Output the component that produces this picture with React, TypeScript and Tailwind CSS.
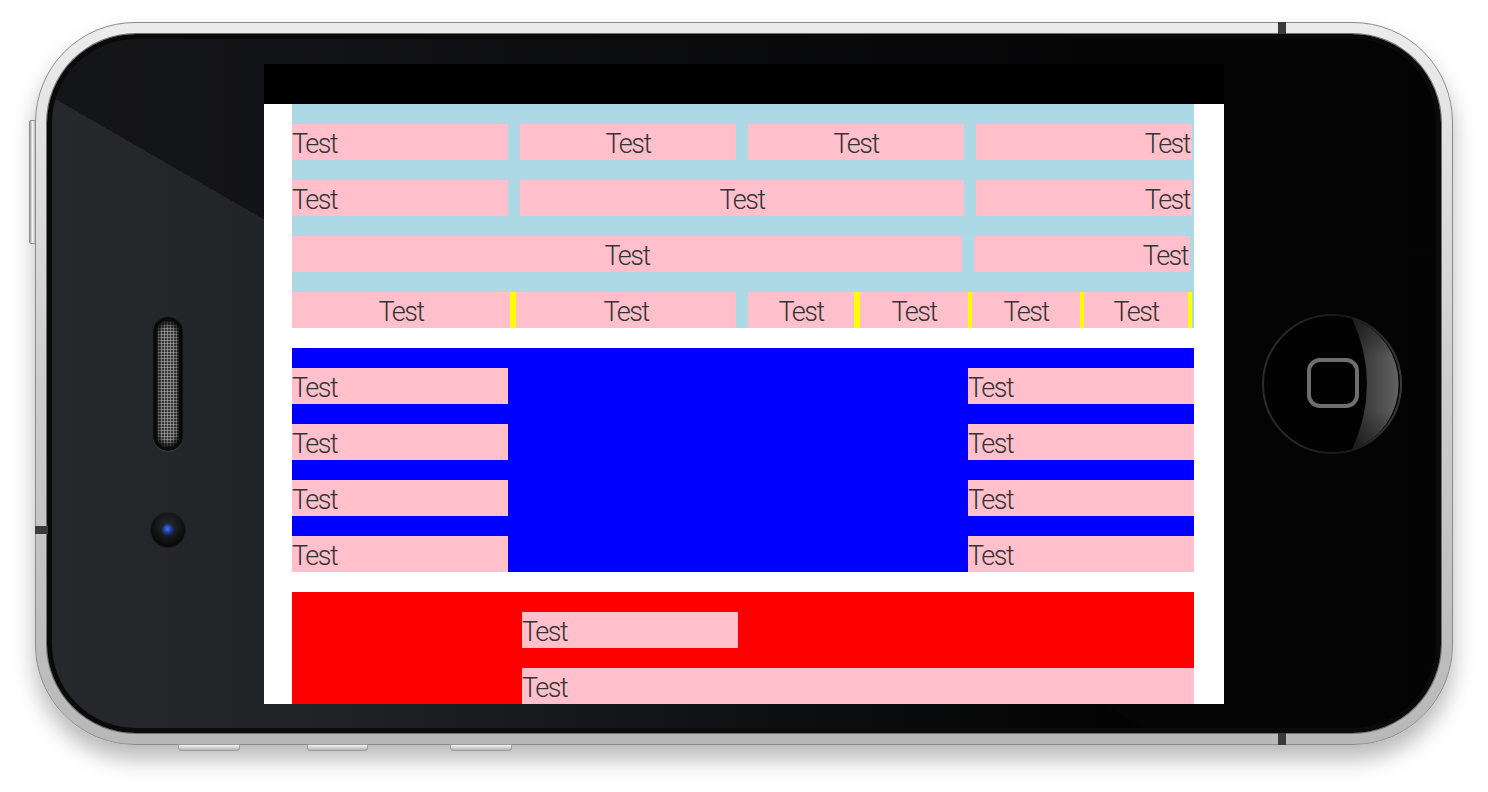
import React from "react";

const font = "font-['Roboto',sans-serif] font-light text-[27px] tracking-[-1.5px] text-[#333]";

function Cell({ className }: { className: string }) {
  return (
    <div className={`h-9 shrink-0 bg-[#ffc0cb] pt-[5px] leading-[31px] whitespace-nowrap ${className}`}>
      Test
    </div>
  );
}

function Yellow({ className }: { className: string }) {
  return <div className={`h-9 shrink-0 bg-[#ffff00] ${className}`} />;
}

function Screen() {
  return (
    <div className={`mt-[25px] flex h-[640px] w-[960px] shrink-0 flex-col overflow-hidden bg-white ${font}`}>
      <div className="h-10 shrink-0 bg-black" />
      <div className="flex flex-col gap-5 pl-[28px] pr-[30px]">
        {/* Section 1 */}
        <div className="flex flex-col gap-5 bg-[#add8e6] pt-5">
          <div className="flex gap-3">
            <Cell className="w-[216px] text-left" />
            <Cell className="w-[216px] text-center" />
            <Cell className="w-[216px] text-center" />
            <Cell className="w-[216px] pr-[2px] text-right" />
          </div>
          <div className="flex gap-3">
            <Cell className="w-[216px] text-left" />
            <Cell className="w-[444px] text-center" />
            <Cell className="w-[216px] pr-[2px] text-right" />
          </div>
          <div className="flex gap-3">
            <Cell className="w-[670px] text-center" />
            <Cell className="w-[216px] pr-[2px] text-right" />
          </div>
          <div className="flex gap-3">
            <div className="flex">
              <Cell className="w-[218px] text-center" />
              <Yellow className="w-[6px]" />
              <Cell className="w-[220px] text-center" />
            </div>
            <div className="flex">
              <Cell className="w-[106px] text-center" />
              <Yellow className="w-[6px]" />
              <Cell className="w-[108px] text-center" />
              <Yellow className="w-[4px]" />
              <Cell className="w-[108px] text-center" />
              <Yellow className="w-[4px]" />
              <Cell className="w-[104px] text-center" />
              <Yellow className="w-[4px]" />
            </div>
          </div>
        </div>

        {/* Section 2 */}
        <div className="flex justify-between bg-[#0000ff] pt-5">
          <div className="flex w-[216px] flex-col gap-5">
            <Cell className="w-[216px] text-left" />
            <Cell className="w-[216px] text-left" />
            <Cell className="w-[216px] text-left" />
            <Cell className="w-[216px] text-left" />
          </div>
          <div className="flex w-[226px] flex-col gap-5">
            <Cell className="w-[226px] text-left" />
            <Cell className="w-[226px] text-left" />
            <Cell className="w-[226px] text-left" />
            <Cell className="w-[226px] text-left" />
          </div>
        </div>

        {/* Section 3 */}
        <div className="flex flex-col gap-5 bg-[#ff0000] pl-[230px] pt-5 pb-5">
          <Cell className="w-[216px] text-left" />
          <Cell className="w-full text-left" />
        </div>
      </div>
    </div>
  );
}

function HomeButton() {
  return (
    <svg width="140" height="140" viewBox="0 0 140 140">
      <defs>
        <linearGradient id="cres" x1="0" y1="0" x2="1" y2="0">
          <stop offset="0" stopColor="#2e2e2e" />
          <stop offset="1" stopColor="#626262" />
        </linearGradient>
        <linearGradient id="cresv" x1="0" y1="0" x2="0" y2="1">
          <stop offset="0" stopColor="#000" stopOpacity="0.45" />
          <stop offset="0.3" stopColor="#000" stopOpacity="0" />
          <stop offset="0.7" stopColor="#000" stopOpacity="0" />
          <stop offset="1" stopColor="#000" stopOpacity="0.45" />
        </linearGradient>
        <linearGradient id="ring" x1="0" y1="0" x2="1" y2="0">
          <stop offset="0" stopColor="#2c2c2c" />
          <stop offset="0.6" stopColor="#161616" />
          <stop offset="1" stopColor="#3a3a3a" />
        </linearGradient>
      </defs>
      <circle cx="70" cy="70" r="69" fill="#020202" stroke="url(#ring)" strokeWidth="2" />
      <path d="M90 4 Q120 70 90 136 A70 70 0 0 0 90 4Z" fill="url(#cres)" />
      <path d="M90 4 Q120 70 90 136 A70 70 0 0 0 90 4Z" fill="url(#cresv)" />
      <rect x="47" y="46" width="48" height="46" rx="11" fill="none" stroke="#6e6e6e" strokeWidth="4" />
    </svg>
  );
}

export default function App() {
  return (
    <div className="h-[792px] w-full overflow-hidden bg-white pt-[22px]">
      <div className="relative mx-auto h-[723px] w-[1418px] rounded-[100px] border border-[#8a8a8a] bg-[linear-gradient(180deg,#ececec_0%,#cdcdcd_50%,#b8b8b8_100%)] p-[11px] shadow-[0_14px_22px_rgba(0,0,0,0.28)]">
        {/* side button (left) */}
        <div className="absolute right-full top-[97px] h-[124px] w-[7px] rounded-l-[2px] border border-[#8e8e8e] bg-[linear-gradient(90deg,#9a9a9a,#f4f4f4_50%,#bdbdbd)]" />
        {/* bottom buttons */}
        <div className="absolute left-[142px] top-full h-[7px] w-[62px] rounded-b-[3px] border border-[#9a9a9a] bg-[linear-gradient(180deg,#f2f2f2,#b5b5b5)]" />
        <div className="absolute left-[271px] top-full h-[7px] w-[61px] rounded-b-[3px] border border-[#9a9a9a] bg-[linear-gradient(180deg,#f2f2f2,#b5b5b5)]" />
        <div className="absolute left-[414px] top-full h-[7px] w-[62px] rounded-b-[3px] border border-[#9a9a9a] bg-[linear-gradient(180deg,#f2f2f2,#b5b5b5)]" />
        {/* antenna marks */}
        <div className="absolute left-[-1px] top-[503px] h-[8px] w-[13px] bg-[#3a3a3a]" />
        <div className="absolute left-[1242px] top-[-1px] h-[12px] w-[8px] bg-[#3a3a3a]" />
        <div className="absolute left-[1242px] top-[710px] h-[12px] w-[8px] bg-[#3a3a3a]" />

        <div className="flex h-full w-full overflow-hidden rounded-[89px] border-[5px] border-[#0a0a0a] bg-[linear-gradient(210deg,rgba(6,6,8,0.55)_57.6%,transparent_57.6%),linear-gradient(90deg,#27282c_0%,#222327_18%,#0f1012_50%,#030303_76%,#000_100%)] shadow-[0_0_0_1px_#6f6f6f]">
          {/* left column */}
          <div className="flex w-[212px] shrink-0 flex-col items-center pl-[20px] pt-[278px]">
            <div className="h-[134px] w-[30px] rounded-full bg-[#0b0b0b] p-[4px] shadow-[0_1px_1px_rgba(255,255,255,0.12)]">
              <div className="h-full w-full rounded-full bg-[radial-gradient(circle,#a0a0a0_0.8px,#2a2a2a_1.5px)] bg-[length:3px_3px] shadow-[inset_0_3px_5px_rgba(0,0,0,0.85),inset_0_-3px_5px_rgba(0,0,0,0.85)]" />
            </div>
            <div className="mt-[61px] flex h-9 w-9 items-center justify-center rounded-full border border-[#1c1c1f] bg-[radial-gradient(circle_at_50%_40%,#2c2d31,#0a0a0b_70%)]">
              <div className="h-[12px] w-[12px] rounded-full bg-[radial-gradient(circle_at_45%_40%,#4a76e0,#1a3690_45%,#081235_85%)]" />
            </div>
          </div>

          <Screen />

          {/* right column */}
          <div className="flex w-[212px] shrink-0 items-center justify-center pl-[4px]">
            <HomeButton />
          </div>
        </div>
      </div>
    </div>
  );
}
